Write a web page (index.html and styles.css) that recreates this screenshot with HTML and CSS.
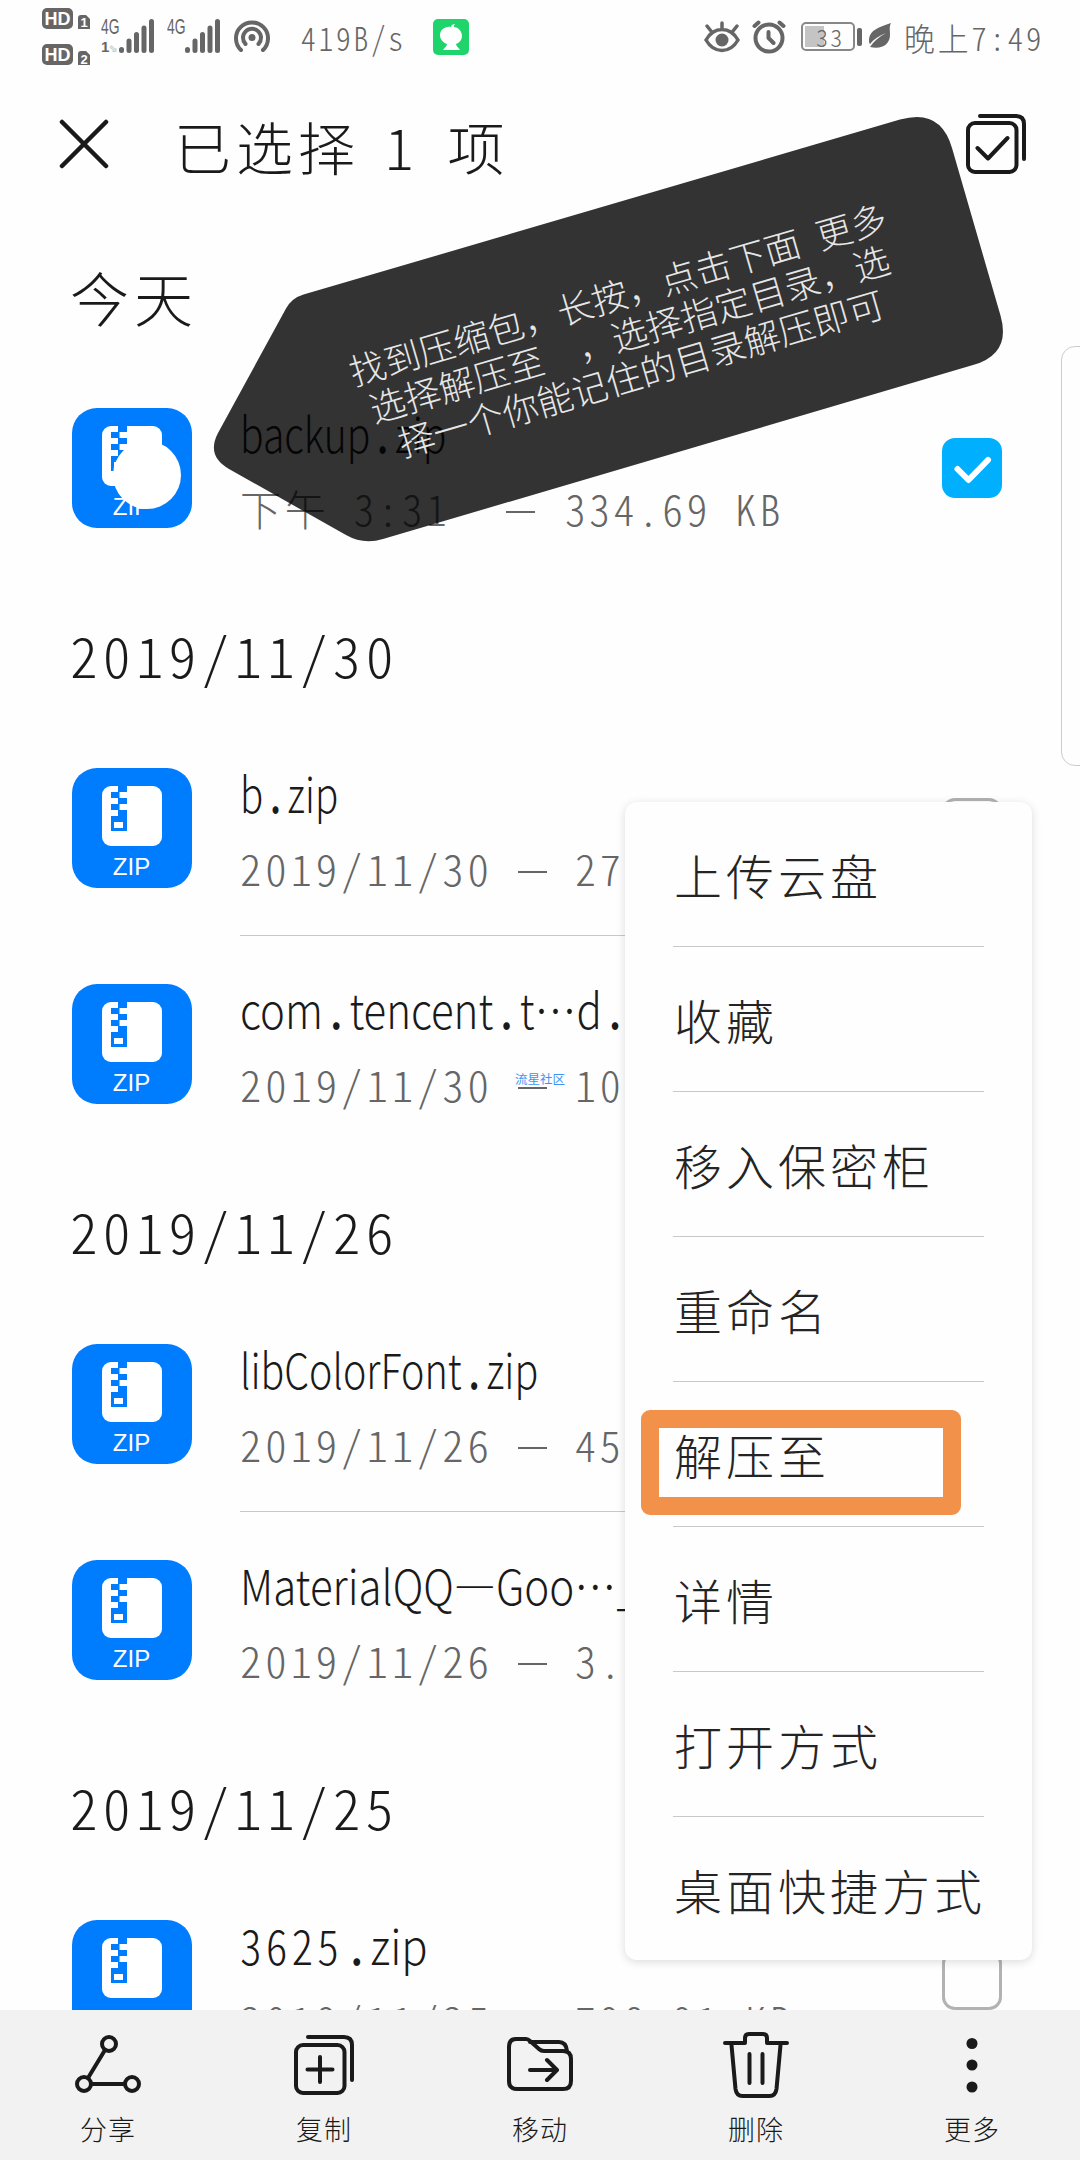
FILE: index.html
```html
<!DOCTYPE html>
<html lang="zh-CN">
<head>
    <meta charset="utf-8" />
    <meta name="viewport" content="width=device-width, initial-scale=1.0">
    <title>文件管理</title>
    <link rel="stylesheet" href="styles.css">
</head>
<body>

    <!-- Icons used more than once -->
    <svg class="defs" width="0" height="0">
        <symbol id="zip" viewBox="0 0 120 120">
            <rect width="120" height="120" rx="25" fill="#007dff"/>
            <rect x="30" y="18" width="60" height="60" rx="9" fill="#fff"/>
            <path d="M46 17h9v7h-9zM39 24h8.500v6H39zM46 30h9v6h-9zM39 36h8.500v6H39zM46 42h9v6h-9zM39 48h16v15H39z" fill="#007dff"/>
            <path d="M42 54h9v6h-9z" fill="#fff"/>
            <text x="59.500" y="107" font-size="24" text-anchor="middle" fill="#fff" class="zip-label">ZIP</text>
        </symbol>
        <symbol id="bars" viewBox="0 0 36 34">
            <path d="M2.500 30.500v1M10 22v9.500M17.500 15.500v16M25 9v22.500M32.500 2.500v29" stroke="#666" stroke-width="5" stroke-linecap="round"/>
        </symbol>
    </svg>

    <div class="screen">
        <div class="statusbar">
            <svg class="hd" width="48" height="64" viewBox="0 0 48 64">
                <rect width="31" height="21" rx="5" fill="#666"/>
                <text x="15.500" y="17" font-size="18" class="badge">HD</text>
                <path d="M36 10q0-3 3-3h5l4 4v10H36z" fill="#666"/>
                <text x="42" y="19" font-size="13" class="badge">1</text>
                <rect y="36" width="31" height="21" rx="5" fill="#666"/>
                <text x="15.500" y="53" font-size="18" class="badge">HD</text>
                <path d="M36 46q0-3 3-3h5l4 4v10H36z" fill="#666"/>
                <text x="42" y="55.500" font-size="13" class="badge">2</text>
            </svg>
            <div class="net"><b>4G</b><small>1<i>⬂</i></small></div>
            <svg class="signal" width="36" height="34"><use href="#bars"/></svg>
            <div class="net net-2"><b>4G</b></div>
            <svg class="signal" width="36" height="34"><use href="#bars"/></svg>
            <svg class="hotspot" width="38" height="38" viewBox="0 0 38 38" fill="none" stroke="#666" stroke-width="4" stroke-linecap="round">
                <path d="M8 32a16 16 0 1 1 22 0M12.500 26a9 9 0 1 1 13 0"/>
                <circle cx="19" cy="19.500" r="3.500" fill="#666" stroke="none"/>
            </svg>
            <div class="speed mono"><span class="fit" data-w="105">419B/s</span></div>
            <svg class="app" width="36" height="36" viewBox="0 0 36 36">
                <rect width="36" height="36" rx="5" fill="#1fd56b"/>
                <path d="M18 8c0-2 2-3 4-3-1 1-1 2-1 3 4 0 8 4 8 9 0 4-3 7-6 8 0 2 2 3 4 6H10c2-3 4-4 4-6-3-1-7-4-7-9 0-5 5-9 11-8z" fill="#fff"/>
            </svg>
            <div class="status-right">
                <svg width="36" height="34" viewBox="0 0 36 34" fill="none" stroke="#666" stroke-width="3.500" stroke-linecap="round">
                    <path d="M2 20C10 6 26 6 34 20 26 34 10 34 2 20zM18 8V3M7 11L3 6M29 11l4-5"/>
                    <circle cx="18" cy="20" r="6.500" fill="#666" stroke="none"/>
                </svg>
                <svg class="alarm" width="34" height="34" viewBox="0 0 34 34" fill="none" stroke="#666" stroke-width="4" stroke-linecap="round">
                    <circle cx="17" cy="18" r="13.500"/>
                    <path d="M16.500 12v6l5 5M2.500 6l4-3.500M31.500 6l-4-3.500"/>
                </svg>
                <div class="battery mono"><span class="fit" data-w="28">33</span></div>
                <svg class="leaf" width="23" height="26" viewBox="0 0 23 26">
                    <path d="M22 0C10 4 1 7 0 16c0 3 0 4 1 5C5 16 10 13 17 10 10 14 5 18 1 24c12 3 20-3 20-12 0-5-1-8 1-12z" fill="#666"/>
                </svg>
                <div class="time mono"><span class="fit" data-w="140">晚上7:49</span></div>
            </div>
        </div>

        <div class="header">
            <svg width="50" height="50" viewBox="0 0 50 50" stroke="#1a1a1a" stroke-width="4.500" stroke-linecap="round">
                <path d="M3 3l44 44M47 3L3 47"/>
            </svg>
            <h1><span>已选择</span><span class="count">1</span><span>项</span></h1>
            <svg class="select-all" width="62" height="62" viewBox="0 0 62 62" fill="none" stroke="#1a1a1a" stroke-width="4" stroke-linecap="round" stroke-linejoin="round">
                <rect x="2" y="11" width="48.500" height="49" rx="7"/>
                <path d="M11.500 36l10.500 10.500L41.500 26M14 4h36q8 0 8 8v35"/>
            </svg>
        </div>

        <div class="list">
            <h2 class="today">今天</h2>
            <div class="file">
                <svg class="icon" width="120" height="120"><use href="#zip"/></svg>
                <div class="info">
                    <div class="name"><span class="fit" data-w="206">backup<b>.</b>zip</span></div>
                    <div class="detail mono"><span class="date date-wide"><span class="fit" data-w="210">下午 3:31</span></span><i class="dash"></i><span class="fit" data-w="219">334.69 KB</span></div>
                </div>
                <div class="check checked">
                    <svg width="60" height="60" viewBox="0 0 60 60" fill="none" stroke="#fff" stroke-width="6" stroke-linecap="round" stroke-linejoin="round"><path d="M15.500 31l11 11L46 22"/></svg>
                </div>
            </div>

            <h2 class="mono"><span class="fit" data-w="329">2019/11/30</span></h2>
            <div class="file line">
                <svg class="icon" width="120" height="120"><use href="#zip"/></svg>
                <div class="info">
                    <div class="name"><span class="fit" data-w="98">b<b>.</b>zip</span></div>
                    <div class="detail mono"><span class="date"><span class="fit" data-w="253">2019/11/30</span></span><i class="dash"></i><span class="fit" data-w="50">27</span></div>
                </div>
                <div class="check"></div>
            </div>
            <div class="file">
                <svg class="icon" width="120" height="120"><use href="#zip"/></svg>
                <div class="info">
                    <div class="name"><span class="fit" data-w="388">com<b>.</b>tencent<b>.</b>t…d<b>.</b></span></div>
                    <div class="detail mono"><span class="date"><span class="fit" data-w="253">2019/11/30</span></span><i class="dash"></i><span class="fit" data-w="50">10</span><em class="mark">流星社区</em></div>
                </div>
                <div class="check"></div>
            </div>

            <h2 class="mono"><span class="fit" data-w="329">2019/11/26</span></h2>
            <div class="file line">
                <svg class="icon" width="120" height="120"><use href="#zip"/></svg>
                <div class="info">
                    <div class="name"><span class="fit" data-w="298">libColorFont<b>.</b>zip</span></div>
                    <div class="detail mono"><span class="date"><span class="fit" data-w="253">2019/11/26</span></span><i class="dash"></i><span class="fit" data-w="50">45</span></div>
                </div>
                <div class="check"></div>
            </div>
            <div class="file">
                <svg class="icon" width="120" height="120"><use href="#zip"/></svg>
                <div class="info">
                    <div class="name"><span class="fit" data-w="400">MaterialQQ—Goo…_</span></div>
                    <div class="detail mono"><span class="date"><span class="fit" data-w="253">2019/11/26</span></span><i class="dash"></i><span class="fit" data-w="50">3.</span></div>
                </div>
                <div class="check"></div>
            </div>

            <h2 class="mono"><span class="fit" data-w="329">2019/11/25</span></h2>
            <div class="file">
                <svg class="icon" width="120" height="120"><use href="#zip"/></svg>
                <div class="info">
                    <div class="name"><span class="fit" data-w="188"><span class="mono">3625</span><b>.</b>zip</span></div>
                    <div class="detail mono"><span class="date"><span class="fit" data-w="253">2019/11/25</span></span><i class="dash"></i><span class="fit" data-w="219">798.91 KB</span></div>
                </div>
                <div class="check"></div>
            </div>
        </div>

        <div class="toolbar">
            <div class="tool">
                <svg width="72" height="72" viewBox="0 0 72 72"><circle cx="37" cy="16" r="7"/><circle cx="12" cy="56" r="7"/><circle cx="60" cy="56" r="7"/><path d="M33 22L16 50M19 56h34"/></svg>
                分享
            </div>
            <div class="tool">
                <svg width="72" height="72" viewBox="0 0 72 72"><rect x="8" y="17" width="48.500" height="48" rx="7"/><path d="M32 29v25M19.500 41.500h25M20 9h36q8 0 8 8v35"/></svg>
                复制
            </div>
            <div class="tool">
                <svg width="72" height="72" viewBox="0 0 72 72"><path d="M12 11h10q2 0 4 2l9 8q2 2 5 2h19q8 0 8 8v22q0 8-8 8H13q-8 0-8-8V19q0-8 7-8zM26 14h29q7 0 8 9M26 42h26M43 32l10 10-10 10"/></svg>
                移动
            </div>
            <div class="tool">
                <svg width="72" height="72" viewBox="0 0 72 72"><path d="M5 15h20V10q0-4 4-4h14q4 0 4 4v5h20M11.500 17l4 44q1 7 7 7h27q6 0 7-7l4-44M29.500 26v29M42.500 26v29"/></svg>
                删除
            </div>
            <div class="tool">
                <svg width="72" height="72" viewBox="0 0 72 72" class="dots"><circle cx="36" cy="15.500" r="5.500"/><circle cx="36" cy="37" r="5.500"/><circle cx="36" cy="59" r="5.500"/></svg>
                更多
            </div>
        </div>

        <div class="edge-panel"></div>

        <div class="menu">
            <div class="item">上传云盘</div>
            <div class="item">收藏</div>
            <div class="item">移入保密柜</div>
            <div class="item">重命名</div>
            <div class="item target">解压至</div>
            <div class="item">详情</div>
            <div class="item">打开方式</div>
            <div class="item">桌面快捷方式</div>
        </div>

        <div class="touch"></div>
        <svg class="callout" width="1080" height="600" viewBox="0 0 1080 600">
            <path d="M303.500 294.600L900 119.600Q940.500 107.700 952 148L1000.500 315.600Q1011.600 354 973 365L383 539Q363.500 545 346 535L229 469Q206 456 218 433L286 308.500Q292 298 303.500 294.600z"/>
        </svg>
        <p class="tip">找到压缩包，长按，点击下面 更多<br>选择解压至&#12288;，选择指定目录，选<br>择一个你能记住的目录解压即可</p>
    </div>

    <script>
        // Squeeze or stretch each label to its own width
        for (let el of document.querySelectorAll(".fit")) {
            const w = parseFloat(el.dataset.w);
            el.style.transform = `scaleX(${w / el.offsetWidth})`;
            el.style.marginRight = (w - el.offsetWidth) + "px";
        }
    </script>
</body>
</html>
```

FILE: styles.css
```css
html, body {
    --ink:    #1a1a1a;
    --grey:   #666;
    --line:   #c8c8c8;
    --blue:   #00b0ff;
    --orange: #f29149;

    font-family: "Noto Sans CJK SC", "Noto Sans", sans-serif;
    font-weight: 300;
    color: var(--ink);
    background-color: #fff;
    margin: 0;
    padding: 0;
}

svg { display: block; flex: none; }
.defs { position: absolute; }

.screen {
    display: flex;
    flex-direction: column;
    width: 1080px;
    height: 2160px;
    background-color: #fefefe;
    position: relative;
    overflow: hidden;
}

.fit {
    display: inline-block;
    flex: none;
    white-space: nowrap;
    transform-origin: 0 50%;
}

/* Half-width digits, all on the same pitch */
.mono {
    font-feature-settings: "hwid";
    letter-spacing: 0.09em;
}

/* Status bar */
.statusbar {
    display: flex;
    align-items: flex-start;
    box-sizing: border-box;
    height: 72px;
    padding: 8px 38px 0 42px;
    color: var(--grey);
}

.badge {
    font-family: "Liberation Sans", sans-serif;
    font-weight: bold;
    text-anchor: middle;
    fill: #fff;
}

.net {
    width: 18px;
    margin: 10px 0 0 11px;
    font-family: "Liberation Sans", sans-serif;
    font-size: 22px;
    line-height: 18px;
    white-space: nowrap;
}

.net b { display: block; transform: scaleX(0.63); transform-origin: 0 0; }
.net small { display: block; font-size: 15px; font-weight: bold; margin-top: 2px; }
.net small i { color: #ccc; font-style: normal; font-size: 10px; }
.net-2 { margin-left: 12px; }
.signal { margin-top: 11px; }
.hotspot { margin: 10px 0 0 12px; }

.speed {
    width: 103px;
    margin: 9px 0 0 30px;
    font-size: 33px;
    line-height: 40px;
}

.app { margin: 11px 0 0 29px; }

.status-right {
    display: flex;
    align-items: flex-start;
    margin: 12px 0 0 auto;
}

.alarm { margin-left: 12px; }

.battery {
    box-sizing: border-box;
    width: 54px;
    height: 29px;
    margin: 2px 0 0 15px;
    padding-left: 13px;
    font-size: 24px;
    line-height: 25px;
    border: 2px solid #888;
    border-radius: 5px;
    background: linear-gradient(#c4c4c4, #c4c4c4) 2px 2px / 19px 21px no-repeat;
    position: relative;
}

.battery::after {
    content: "";
    width: 5px;
    height: 18px;
    border-radius: 2px;
    background-color: var(--grey);
    position: absolute;
    left: 54px;
    top: 4px;
}

.leaf { margin: 3px 0 0 14px; }
.time { width: 138px; margin: -3px 0 0 12px; font-size: 32px; line-height: 40px; }

/* Header */
.header {
    display: flex;
    align-items: flex-start;
    box-sizing: border-box;
    height: 144px;
    padding: 47px 52px 0 59px;
}

h1 {
    display: flex;
    flex: 1;
    margin: -12px 0 0 65px;
    font-size: 57px;
    font-weight: 300;
    line-height: 76px;
    letter-spacing: 5px;
}

.count { margin: 0 34px 0 25px; letter-spacing: 0; font-feature-settings: "hwid"; }
.select-all { margin-top: -7px; }

/* File list */
.list {
    flex: 1;
    overflow: hidden;
}

h2 {
    box-sizing: border-box;
    height: 144px;
    margin: 0;
    padding: 38px 0 0 70px;
    font-size: 55px;
    font-weight: 300;
    line-height: 80px;
}

.today { font-size: 59px; padding-top: 41px; letter-spacing: 5px; }

.file {
    display: flex;
    align-items: flex-start;
    box-sizing: border-box;
    height: 216px;
    padding: 0 78px 0 72px;
}

.icon { margin-top: 48px; }
.zip-label { font-family: "Liberation Sans", sans-serif; font-weight: normal; }

.info {
    flex: 1;
    box-sizing: border-box;
    height: 216px;
    margin-left: 48px;
    padding-top: 42px;
    margin-right: -60px;
}

.line .info { border-bottom: 1px solid var(--line); }
.name { font-size: 48px; line-height: 60px; }
.name b { font-weight: 500; padding: 0 8px; }

.detail {
    display: flex;
    margin-top: 16px;
    font-size: 42px;
    line-height: 60px;
    color: var(--grey);
    position: relative;
}

.date { width: 278px; }
.date-wide { width: 266px; }

.dash {
    width: 29px;
    height: 2px;
    margin: 33px 28px 0 0;
    background-color: var(--grey);
}

.date-wide + .dash { margin-right: 30px; }

.mark {
    font-size: 12.5px;
    font-style: normal;
    font-weight: 400;
    line-height: 16px;
    letter-spacing: 0;
    color: #3d94f5;
    position: absolute;
    left: 275px;
    top: 17px;
}

.check {
    box-sizing: border-box;
    width: 60px;
    height: 60px;
    margin-top: 78px;
    border: 3px solid #b2b2b2;
    border-radius: 13px;
}

.checked { border: none; background-color: var(--blue); }

/* Bottom toolbar */
.toolbar {
    display: grid;
    grid-template-columns: repeat(5, 1fr);
    height: 150px;
    background-color: #f2f2f2;
}

.tool {
    display: flex;
    flex-direction: column;
    align-items: center;
    padding-top: 18px;
    font-size: 27px;
    line-height: 40px;
    letter-spacing: 1px;
    gap: 9px;
}

.tool svg {
    fill: none;
    stroke: var(--ink);
    stroke-width: 4;
    stroke-linecap: round;
    stroke-linejoin: round;
}

.tool .dots { fill: var(--ink); stroke: none; }

/* Popup menu */
.menu {
    box-sizing: border-box;
    width: 407px;
    height: 1158px;
    padding: 0 48px;
    border-radius: 12px;
    background-color: #fefefe;
    box-shadow: 0 2px 10px rgba(0, 0, 0, 0.14);
    position: absolute;
    left: 625px;
    top: 802px;
}

.item {
    box-sizing: border-box;
    height: 145px;
    padding-left: 1px;
    font-size: 48px;
    line-height: 144px;
    letter-spacing: 4px;
    white-space: nowrap;
    color: #242424;
    border-bottom: 1px solid var(--line);
    position: relative;
}

.item:last-child { border: none; }

.target::before {
    content: "";
    box-sizing: border-box;
    width: 320px;
    height: 105px;
    border: 18px solid var(--orange);
    border-radius: 9px;
    position: absolute;
    left: -32px;
    top: 28px;
}

.edge-panel {
    width: 40px;
    height: 418px;
    border: 1px solid #ccc;
    border-radius: 14px;
    position: absolute;
    left: 1061px;
    top: 346px;
}

/* Annotations over the list */
.touch {
    width: 68px;
    height: 68px;
    border-radius: 50%;
    background-color: #fff;
    position: absolute;
    left: 113px;
    top: 441px;
}

.callout {
    fill: rgba(0, 0, 0, 0.8);
    position: absolute;
    left: 0;
    top: 0;
}

.tip {
    width: 600px;
    margin: 0;
    font-size: 36px;
    line-height: 41px;
    text-align: center;
    word-spacing: 10px;
    color: #e6e6e6;
    position: absolute;
    left: 329px;
    top: 271px;
    transform: rotate(-16.3deg);
}
```
